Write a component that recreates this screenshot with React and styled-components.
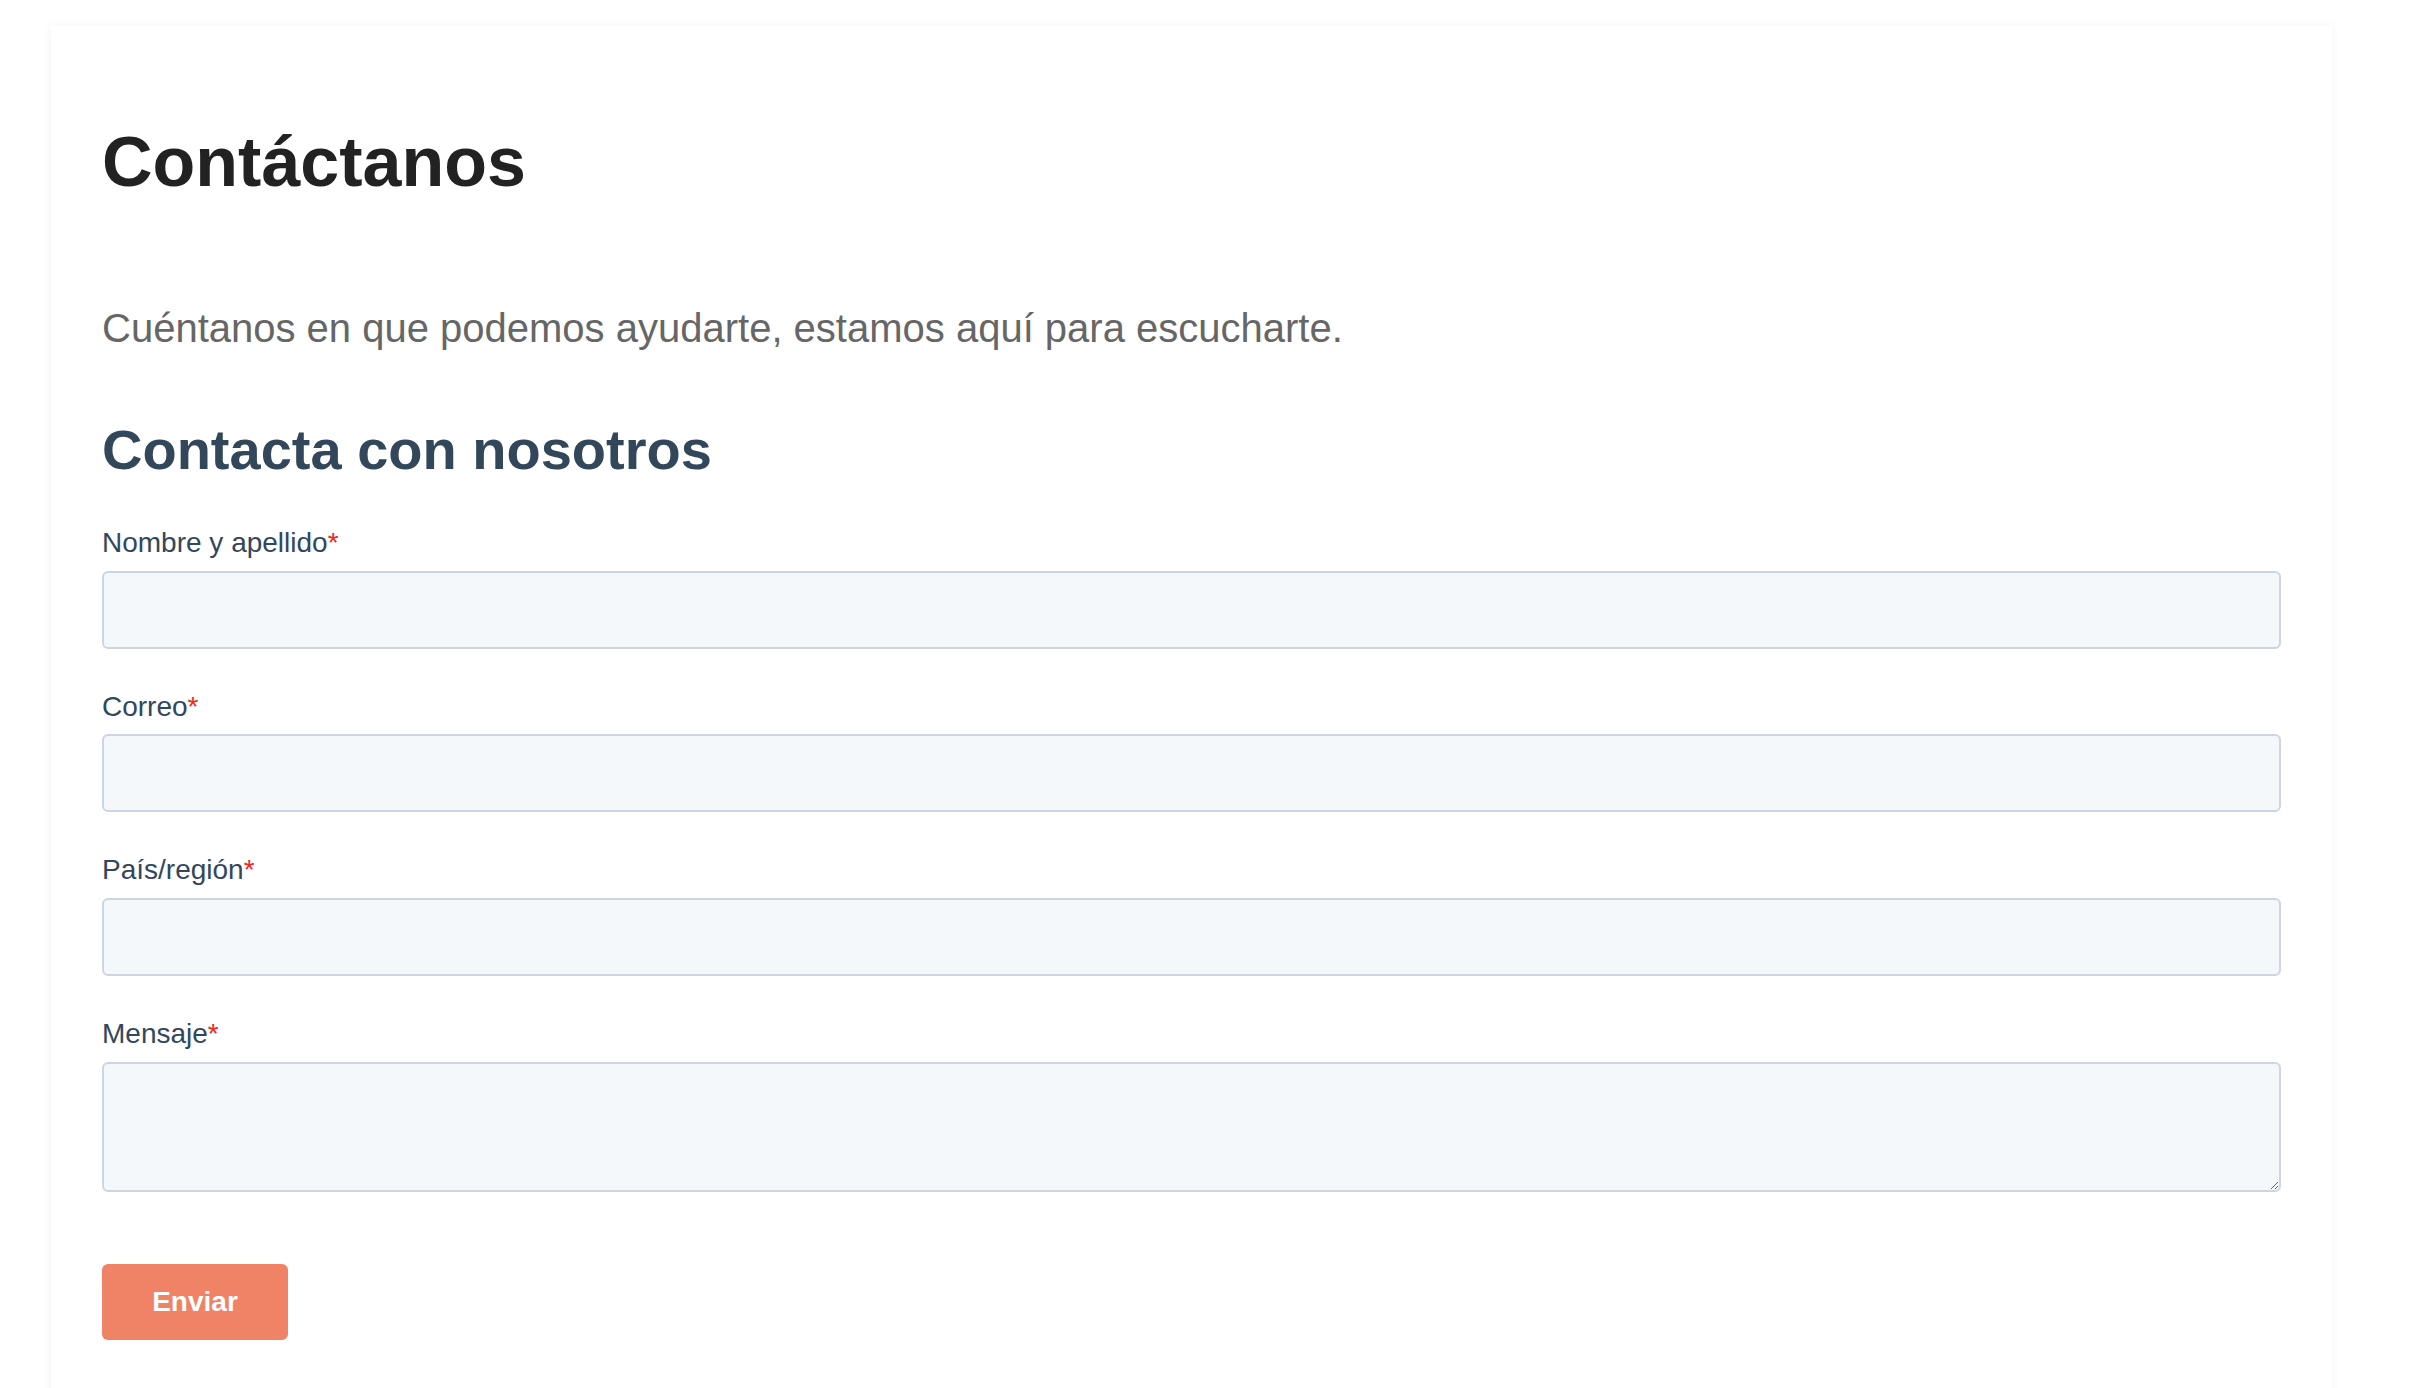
import React from 'react';
import styled, { createGlobalStyle } from 'styled-components';

const GlobalStyle = createGlobalStyle`
    html, body {
        margin: 0;
        padding: 0;
        background: #ffffff;
        font-family: "Liberation Sans", Arial, Helvetica, sans-serif;
    }
`;

const Page = styled.div`
    padding: 26px 82px 0 51px;
`;

const Card = styled.div`
    background: #ffffff;
    padding: 94px 51px 120px;
    box-shadow: 0 0 10px rgba(0, 0, 0, 0.05);
`;

const Title = styled.h1`
    margin: 0;
    font-size: 70px;
    line-height: 1.2;
    font-weight: 700;
    color: #222222;
`;

const Intro = styled.p`
    margin: 94px 0 0;
    font-size: 40px;
    line-height: 60px;
    color: #666666;
`;

const FormTitle = styled.h2`
    margin: 58px 0 43px;
    font-size: 56px;
    line-height: 1.2;
    font-weight: 700;
    color: #33475b;
`;

const Form = styled.form`
    display: flex;
    flex-direction: column;
`;

const Field = styled.div`
    display: flex;
    flex-direction: column;
    gap: 11px;
    margin-bottom: ${p => (p.$last ? '72px' : '41px')};
`;

const Label = styled.label`
    font-size: 28px;
    line-height: 1.2;
    color: #33475b;

    span {
        color: #f2261c;
    }
`;

const Input = styled.input`
    box-sizing: border-box;
    width: 100%;
    height: 78px;
    padding: 0 16px;
    border: 2px solid #cbd6e2;
    border-radius: 6px;
    background: #f5f8fa;
    font-family: inherit;
    font-size: 28px;
    color: #33475b;
    outline: none;
`;

const TextArea = styled.textarea`
    box-sizing: border-box;
    width: 100%;
    height: 130px;
    padding: 12px 16px;
    border: 2px solid #cbd6e2;
    border-radius: 6px;
    background: #f5f8fa;
    font-family: inherit;
    font-size: 28px;
    color: #33475b;
    outline: none;
    resize: vertical;
`;

const SubmitButton = styled.button`
    align-self: flex-start;
    width: 186px;
    height: 76px;
    border: none;
    border-radius: 6px;
    background: #f08266;
    color: #ffffff;
    font-family: inherit;
    font-size: 28px;
    font-weight: 700;
    cursor: pointer;
`;

const fields = [
    { id: 'name', label: 'Nombre y apellido' },
    { id: 'email', label: 'Correo' },
    { id: 'country', label: 'País/región' },
];

const App = () => {
    return (
        <>
            <GlobalStyle />
            <Page>
                <Card>
                    <Title>Contáctanos</Title>
                    <Intro>Cuéntanos en que podemos ayudarte, estamos aquí para escucharte.</Intro>
                    <FormTitle>Contacta con nosotros</FormTitle>
                    <Form onSubmit={e => e.preventDefault()}>
                        {fields.map(f => (
                            <Field key={f.id}>
                                <Label htmlFor={f.id}>{f.label}<span>*</span></Label>
                                <Input id={f.id} type="text" />
                            </Field>
                        ))}
                        <Field $last>
                            <Label htmlFor="message">Mensaje<span>*</span></Label>
                            <TextArea id="message" />
                        </Field>
                        <SubmitButton type="submit">Enviar</SubmitButton>
                    </Form>
                </Card>
            </Page>
        </>
    );
};

export default App;
